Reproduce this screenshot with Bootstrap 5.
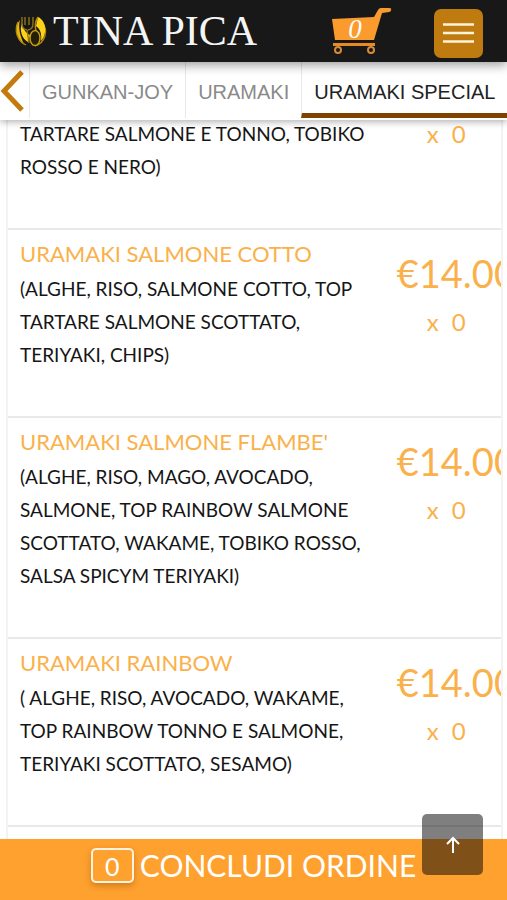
<!DOCTYPE html>
<html lang="it">
<head>
<meta charset="utf-8">
<meta name="viewport" content="width=device-width, initial-scale=1">
<title>Tina Pica</title>
<link href="https://cdn.jsdelivr.net/npm/bootstrap@5.3.0/dist/css/bootstrap.min.css" rel="stylesheet">
<style>
body { font-family: Lato, sans-serif; color: #161616; background: #fff; }
.topbar { background: #181818; height: 62px; padding: 0 24px 0 14px; box-shadow: 0 3px 10px rgba(0,0,0,.4); z-index: 3; }
.brand { font-family: "Liberation Serif", serif; font-size: 42px; line-height: 60px; color: #f4f4f4; gap: 5px; }
.cart-link { width: 60px; margin-right: 42px; }
.menu-btn { width: 49px; height: 49px; border-radius: 7px; background: #bf7b10; margin-top: 4px; }
.tabs-bar { height: 58px; background: #fff; box-shadow: 0 2px 7px rgba(0,0,0,.3); z-index: 2; font-family: "Liberation Sans", sans-serif; font-size: 20px; }
.prev-btn { width: 29px; }
.tab-link { color: #8a8a8a; padding: 0 12px; line-height: 60px; height: 56px; border-left: 1px solid #e8e8e8; }
.tab-link.active { color: #222; border-bottom: 5px solid #7f4200; }
.dishes { margin: -3px 4px 0 6px; padding-bottom: 60px; border: solid #f3f3f3; border-width: 0 2px; }
.dish { border-bottom: 2px solid #e9e9e9; padding-bottom: 45px; }
.dish-text { padding: 0 0 0 12px; }
.dish-title { color: #fab14b; font-size: 22px; line-height: 33px; margin: 0; padding-top: 7px; height: 42px; }
.dish p { font-size: 19px; line-height: 33px; margin: 0; }
.dish-side { color: #fab14b; padding: 0 0 0 19px; overflow: hidden; }
.price { font-size: 38px; line-height: 46px; padding-top: 20px; }
.qty { font-size: 24px; line-height: 33px; padding: 9px 0 0 30px; gap: 13px; }
.qty-first { padding-top: 0; }
.order-bar { background: #ffa12f; height: 61px; padding: 0 0 9px; gap: 6px; color: #fff; font-size: 30px; }
.order-count { width: 43px; height: 35px; border: 2px solid #fff3df; border-radius: 5px; font-size: 25px; line-height: 33px; box-shadow: 0 3px 6px rgba(120,60,0,.35); }
.up-btn { right: 24px; bottom: 25px; width: 61px; height: 61px; border-radius: 5px; background: rgba(0,0,0,.5); z-index: 1040; }
</style>
<script src="https://cdn.jsdelivr.net/npm/bootstrap@5.3.0/dist/js/bootstrap.bundle.min.js"></script>
</head>
<body class="vh-100 overflow-hidden d-flex flex-column">
<header class="topbar d-flex align-items-center flex-shrink-0 position-relative">
  <a href="#" class="brand d-flex align-items-center text-decoration-none text-nowrap me-auto">
    <svg width="34" height="36" viewBox="0 0 34 36" fill="none" aria-hidden="true">
      <path d="M6 7C0 13 1 26 10 31C6 23 4 14 6 7Z" fill="#e8b90c"/>
      <path d="M8 10C5 17 8 26 14 29L16 22C12 20 9 16 8 10Z" fill="#ffd21a"/>
      <path d="M4 9C0 17 3 28 12 32M28 9C35 18 31 30 21 33" stroke="#b38a0b" stroke-width="1.3"/>
      <path d="M24 4C33 8 33 22 27 28C28 20 26 16 22 13Z" fill="#ffd21a"/>
      <path d="M8 4V11Q8 16 13 17L15 30M19 4V11Q19 16 14 17M11 4V12M15 4V12" stroke="#8f7414" stroke-width="1.4"/>
      <path d="M24 4Q20 10 22 18" stroke="#b38a0b" stroke-width="1.5"/>
      <ellipse cx="21" cy="25" rx="5" ry="7.5" fill="#242007" stroke="#c99d10" stroke-width="1.5"/>
    </svg>
    <span>TINA PICA</span>
  </a>
  <a href="#" class="cart-link flex-shrink-0" aria-label="Carrello">
    <svg class="d-block" width="60" height="48" viewBox="0 0 60 48">
      <path d="M0 12L42 10L46 3Q47 1 49 1L57 1Q60 1 59 3Q59 5 57 5L50 6L42 33H3Z" fill="#fb9b2e"/>
      <path d="M1 36H43V39H1Z" fill="#e78a22"/>
      <circle cx="6" cy="43" r="3" fill="none" stroke="#d78a38" stroke-width="2"/>
      <circle cx="39" cy="43" r="3" fill="none" stroke="#d78a38" stroke-width="2"/>
      <text x="23" y="31" text-anchor="middle" font-family="Liberation Serif, serif" font-style="italic" font-size="27" fill="#fff">0</text>
    </svg>
  </a>
  <button type="button" class="menu-btn btn border-0 p-0 flex-shrink-0" aria-label="Menu">
    <svg class="d-block mx-auto" width="31" height="22" viewBox="0 0 31 22" stroke="#fff3d8" stroke-width="2.6"><path d="M0 2.500H31M0 11H31M0 19.500H31"/></svg>
  </button>
</header>
<nav class="tabs-bar d-flex flex-shrink-0 position-relative">
  <button type="button" class="prev-btn btn border-0 p-0 flex-shrink-0" aria-label="Indietro">
    <svg class="d-block" width="26" height="44" viewBox="0 0 26 44" fill="none" stroke="#c47a0c" stroke-width="5"><path d="M22 3L4 22L22 41"/></svg>
  </button>
  <div class="d-flex overflow-hidden text-nowrap">
    <a href="#" class="tab-link flex-shrink-0 text-decoration-none">GUNKAN-JOY</a>
    <a href="#" class="tab-link flex-shrink-0 text-decoration-none">URAMAKI</a>
    <a href="#" class="tab-link active flex-shrink-0 text-decoration-none" aria-current="page">URAMAKI SPECIAL</a>
  </div>
</nav>
<main class="dishes flex-grow-1 overflow-hidden">
  <article class="dish row g-0">
    <div class="dish-text col-9"><p>TARTARE SALMONE E TONNO, TOBIKO ROSSO E NERO)</p></div>
    <div class="dish-side col-3"><div class="qty qty-first d-flex"><span>x</span><span>0</span></div></div>
  </article>
  <article class="dish row g-0">
    <div class="dish-text col-9"><h2 class="dish-title fw-normal">URAMAKI SALMONE COTTO</h2><p>(ALGHE, RISO, SALMONE COTTO, TOP TARTARE SALMONE SCOTTATO, TERIYAKI, CHIPS)</p></div>
    <div class="dish-side col-3"><div class="price">€14.00</div><div class="qty d-flex"><span>x</span><span>0</span></div></div>
  </article>
  <article class="dish row g-0">
    <div class="dish-text col-9"><h2 class="dish-title fw-normal">URAMAKI SALMONE FLAMBE'</h2><p>(ALGHE, RISO, MAGO, AVOCADO, SALMONE, TOP RAINBOW SALMONE SCOTTATO, WAKAME, TOBIKO ROSSO, SALSA SPICYM TERIYAKI)</p></div>
    <div class="dish-side col-3"><div class="price">€14.00</div><div class="qty d-flex"><span>x</span><span>0</span></div></div>
  </article>
  <article class="dish row g-0">
    <div class="dish-text col-9"><h2 class="dish-title fw-normal">URAMAKI RAINBOW</h2><p>( ALGHE, RISO, AVOCADO, WAKAME, TOP RAINBOW TONNO E SALMONE, TERIYAKI SCOTTATO, SESAMO)</p></div>
    <div class="dish-side col-3"><div class="price">€14.00</div><div class="qty d-flex"><span>x</span><span>0</span></div></div>
  </article>
</main>
<button type="button" class="order-bar fixed-bottom btn border-0 rounded-0 w-100 d-flex align-items-center justify-content-center">
  <span class="order-count">0</span><span>CONCLUDI ORDINE</span>
</button>
<button type="button" class="up-btn btn border-0 p-0 position-fixed" aria-label="Torna su">
  <svg class="d-block mx-auto" width="16" height="18" viewBox="0 0 16 18" fill="none" stroke="#fff" stroke-width="2"><path d="M8 17V2M2 8L8 2L14 8"/></svg>
</button>
</body>
</html>
